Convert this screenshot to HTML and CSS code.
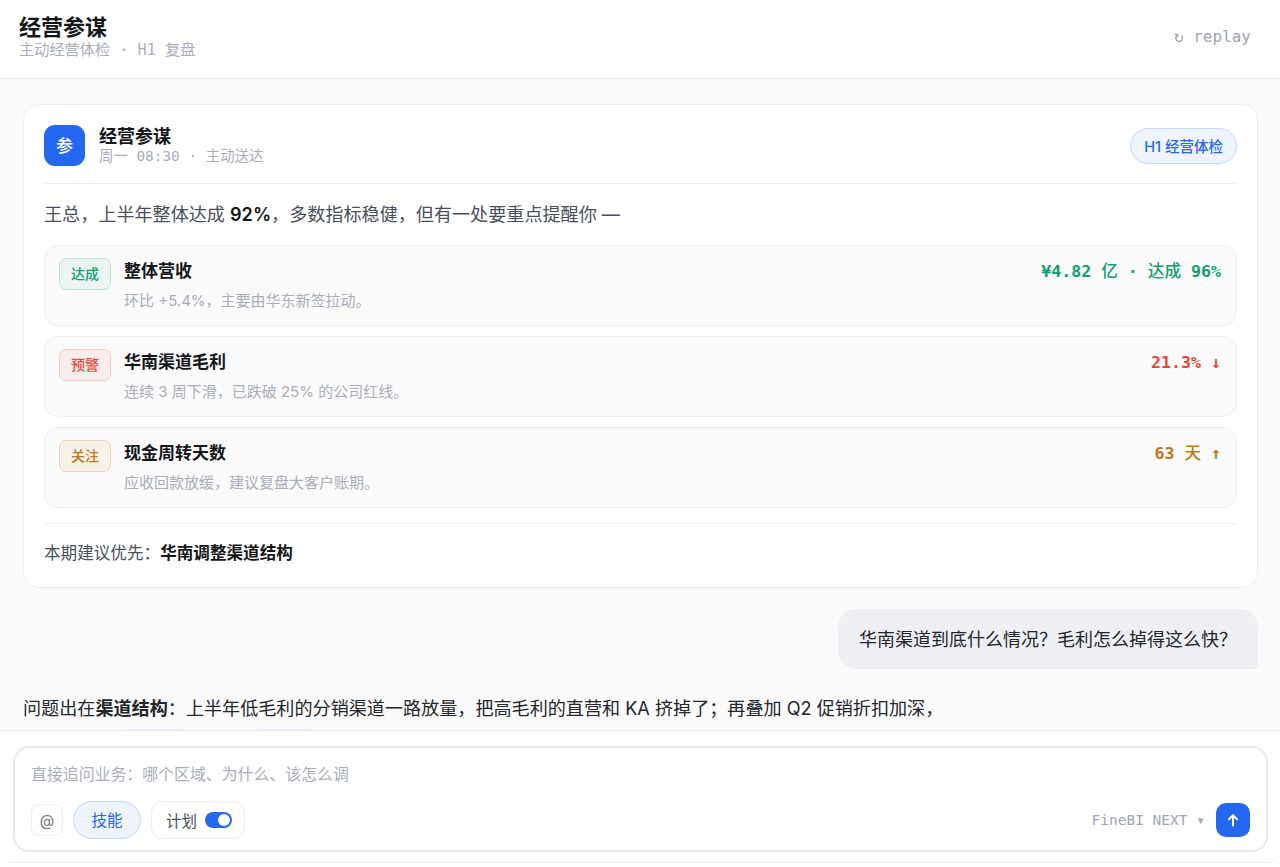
FILE: index.html
```html
<!DOCTYPE html>
<html lang="zh-CN">
<head>
    <meta charset="UTF-8">
    <meta name="viewport" content="width=device-width, initial-scale=1.0">
    <title>经营参谋</title>
    <link rel="stylesheet" href="styles.css">
</head>
<body>
    <div class="app">
        <header class="top-bar">
            <div class="top-titles">
                <div class="top-title">经营参谋</div>
                <div class="top-sub">主动经营体检 · H1 复盘</div>
            </div>
            <div class="replay">↻ replay</div>
        </header>

        <main class="chat">
            <section class="card">
                <div class="card-head">
                    <div class="avatar">参</div>
                    <div class="card-who">
                        <div class="card-name">经营参谋</div>
                        <div class="card-time">周一 08:30 · 主动送达</div>
                    </div>
                    <div class="card-tag">H1 经营体检</div>
                </div>
                <p class="lead">王总，上半年整体达成 <b>92%</b>，多数指标稳健，但有一处要重点提醒你 —</p>
                <div class="rows">
                    <div class="row">
                        <span class="badge good">达成</span>
                        <div class="row-text">
                            <div class="row-title">整体营收</div>
                            <div class="row-desc">环比 +5.4%，主要由华东新签拉动。</div>
                        </div>
                        <div class="row-value good-text">¥4.82 <span class="cjk">亿</span> · <span class="cjk">达成</span> 96%</div>
                    </div>
                    <div class="row">
                        <span class="badge warn">预警</span>
                        <div class="row-text">
                            <div class="row-title">华南渠道毛利</div>
                            <div class="row-desc">连续 3 周下滑，已跌破 25% 的公司红线。</div>
                        </div>
                        <div class="row-value warn-text">21.3% ↓</div>
                    </div>
                    <div class="row">
                        <span class="badge note">关注</span>
                        <div class="row-text">
                            <div class="row-title">现金周转天数</div>
                            <div class="row-desc">应收回款放缓，建议复盘大客户账期。</div>
                        </div>
                        <div class="row-value note-text">63 <span class="cjk">天</span> ↑</div>
                    </div>
                </div>
                <div class="card-foot">本期建议优先：<b>华南调整渠道结构</b></div>
            </section>

            <div class="user-msg">华南渠道到底什么情况？毛利怎么掉得这么快？</div>

            <div class="answer">
                问题出在<b>渠道结构</b>：上半年低毛利的分销渠道一路放量，把高毛利的直营和 KA 挤掉了；再叠加 Q2 促销折扣加深，
                <div class="answer-line"><span class="chip"></span><span class="chip"></span></div>
            </div>
        </main>

        <footer class="input-area">
            <div class="composer">
                <div class="placeholder">直接追问业务：哪个区域、为什么、该怎么调</div>
                <div class="tools">
                    <button class="at-btn">@</button>
                    <button class="skill-btn">技能</button>
                    <div class="plan-btn">
                        <span>计划</span>
                        <span class="switch"><span class="knob"></span></span>
                    </div>
                    <div class="model">FineBI NEXT ▾</div>
                    <button class="send-btn">
                        <svg width="14" height="14" viewBox="0 0 14 14" fill="none" stroke="#fff" stroke-width="2" stroke-linecap="round" stroke-linejoin="round"><path d="M7 12.5V2.5M3 6.3 7 2.3l4 4"/></svg>
                    </button>
                </div>
            </div>
        </footer>
    </div>
</body>
</html>
```

FILE: styles.css
```css
* {
    box-sizing: border-box;
}
html, body {
    height: 100%;
}
body {
    margin: 0;
    background-color: #FFFFFF;
    font-family: Inter, "Liberation Sans", "Noto Sans CJK SC", sans-serif;
    color: #14161A;
    overflow: hidden;
}
.app {
    height: 863px;
    display: flex;
    flex-direction: column;
    background-color: #FAFAFA;
    border-bottom: 1px solid #ECEDEF;
    border-radius: 14px;
    overflow: hidden;
}
.top-bar {
    flex: none;
    height: 79px;
    padding: 13px 29px 0 19px;
    display: flex;
    justify-content: space-between;
    align-items: flex-start;
    background-color: #FFFFFF;
    border-bottom: 1px solid #E8E9EC;
}
.top-title {
    font-size: 22px;
    line-height: 28px;
    font-weight: 600;
}
.top-sub {
    font-family: "DejaVu Sans Mono", "Noto Sans CJK SC", monospace;
    font-size: 15.2px;
    line-height: 18px;
    color: #A9AEB8;
}
.replay {
    margin-top: 13px;
    font-family: "DejaVu Sans Mono", "Noto Sans CJK SC", monospace;
    font-size: 16px;
    line-height: 22px;
    color: #A0A5AF;
}
.chat {
    flex: 1;
    min-height: 0;
    overflow: hidden;
    padding: 25px 22px 0 23px;
}
.card {
    background-color: #FFFFFF;
    border: 1px solid #ECEDEF;
    border-radius: 16px;
    padding: 20px;
    height: 484px;
}
.card-head {
    display: flex;
    align-items: center;
    gap: 14px;
    height: 59px;
    padding-bottom: 17px;
    border-bottom: 1px solid #ECEDEF;
}
.avatar {
    width: 41px;
    height: 41px;
    padding-bottom: 3px;
    border-radius: 11px;
    background-color: #2468F2;
    color: #FFFFFF;
    font-size: 17px;
    font-weight: 500;
    display: flex;
    align-items: center;
    justify-content: center;
}
.card-who {
    flex: 1;
}
.card-name {
    font-size: 18px;
    line-height: 22px;
    font-weight: 600;
}
.card-time {
    font-family: "DejaVu Sans Mono", "Noto Sans CJK SC", monospace;
    font-size: 14.4px;
    line-height: 17px;
    color: #A9AEB8;
}
.card-tag {
    height: 36px;
    padding: 0 13px 1px;
    display: flex;
    align-items: center;
    border: 1px solid #C6D7F9;
    border-radius: 18px;
    background-color: #EEF3FE;
    color: #2468F2;
    font-size: 14.5px;
    font-weight: 500;
}
.lead {
    margin: 17px 0 18px;
    font-size: 18.1px;
    line-height: 26px;
    color: #4A4F59;
}
.lead b {
    color: #14161A;
    font-weight: 600;
}
.rows {
    display: flex;
    flex-direction: column;
    gap: 10px;
}
.row {
    height: 81px;
    padding: 12px 15px 0 14px;
    display: flex;
    align-items: flex-start;
    background-color: #FAFAFA;
    border: 1px solid #ECEDEF;
    border-radius: 14px;
}
.badge {
    flex: none;
    width: 52px;
    height: 32px;
    margin-right: 13px;
    padding-bottom: 2px;
    display: flex;
    align-items: center;
    justify-content: center;
    border: 1px solid;
    border-radius: 7px;
    font-size: 14px;
    font-weight: 500;
}
.good {
    color: #12A071;
    background-color: #ECF4F1;
    border-color: #BFE3D5;
}
.warn {
    color: #E5493A;
    background-color: #FBEDEB;
    border-color: #F6CDC8;
}
.note {
    color: #BC7A1B;
    background-color: #F6F1E9;
    border-color: #EBD8BC;
}
.row-text {
    flex: 1;
}
.row-title {
    font-size: 17px;
    line-height: 26px;
    font-weight: 600;
}
.row-desc {
    margin-top: 6px;
    font-size: 15px;
    line-height: 22px;
    color: #A9AEB8;
}
.row-value {
    margin-top: 1px;
    font-family: "DejaVu Sans Mono", "Noto Sans CJK SC", monospace;
    font-size: 16.6px;
    line-height: 26px;
    font-weight: 700;
}
.cjk {
    font-weight: 500;
}
.good-text { color: #12A071; }
.warn-text { color: #E5493A; }
.note-text { color: #BC7A1B; }
.card-foot {
    margin-top: 15px;
    padding-top: 16px;
    border-top: 1px solid #ECEDEF;
    font-size: 16.6px;
    line-height: 26px;
    color: #4A4F59;
}
.card-foot b {
    color: #14161A;
    font-weight: 600;
}
.user-msg {
    width: fit-content;
    margin: 21px 0 0 auto;
    height: 60px;
    padding: 0 21px 3px;
    display: flex;
    align-items: center;
    background-color: #EEEFF3;
    border-radius: 18px 18px 4px 18px;
    font-size: 18px;
    color: #23262C;
}
.answer {
    margin-top: 24px;
    font-size: 18.1px;
    line-height: 30px;
    color: #23262C;
}
.answer b {
    font-weight: 600;
}
.answer-line {
    margin-top: 6px;
    padding-left: 97px;
    display: flex;
    gap: 67px;
}
.chip {
    width: 66px;
    height: 26px;
    border-radius: 7px;
    background-color: #E9EFFC;
}
.input-area {
    flex: none;
    height: 132px;
    padding: 15px 12px 0 13px;
    background-color: #FFFFFF;
    border-top: 1px solid #E8E9EC;
}
.composer {
    height: 106px;
    padding: 16px 16px 0 16px;
    background-color: #FFFFFF;
    border: 2px solid #E8E9EC;
    border-radius: 16px;
}
.placeholder {
    font-size: 15.9px;
    line-height: 22px;
    color: #A9AEB8;
}
.tools {
    margin-top: 15px;
    display: flex;
    align-items: center;
    gap: 10px;
}
button {
    font-family: inherit;
    cursor: pointer;
}
.at-btn {
    width: 32px;
    height: 32px;
    padding: 0;
    background-color: #FFFFFF;
    border: 1px solid #ECEDEF;
    border-radius: 8px;
    color: #6D727C;
    font-size: 15px;
}
.skill-btn {
    width: 68px;
    height: 38px;
    padding: 0 0 2px;
    background-color: #EEF3FE;
    border: 1px solid #C6D7F9;
    border-radius: 19px;
    color: #2468F2;
    font-size: 15.5px;
}
.plan-btn {
    width: 94px;
    height: 38px;
    padding: 0 0 1px 14px;
    display: flex;
    align-items: center;
    gap: 8px;
    border: 1px solid #ECEDEF;
    border-radius: 12px;
    font-size: 15.5px;
    color: #4A4F59;
}
.switch {
    width: 27px;
    height: 16px;
    padding: 2px;
    display: flex;
    justify-content: flex-end;
    border-radius: 8px;
    background-color: #2468F2;
}
.knob {
    width: 12px;
    height: 12px;
    border-radius: 50%;
    background-color: #FFFFFF;
}
.model {
    margin-left: auto;
    margin-right: 1px;
    font-family: "DejaVu Sans Mono", "Noto Sans CJK SC", monospace;
    font-size: 14.5px;
    color: #A0A5AF;
}
.send-btn {
    width: 34px;
    height: 34px;
    padding: 0;
    display: flex;
    align-items: center;
    justify-content: center;
    background-color: #2468F2;
    border: 0;
    border-radius: 10px;
}
```
